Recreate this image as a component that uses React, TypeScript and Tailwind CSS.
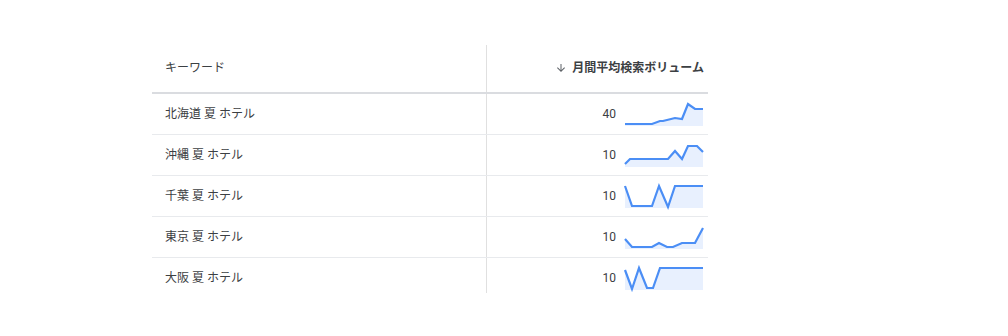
import React from "react";

type Row = {
	keyword: string;
	volume: number;
	points: [number, number][];
};

const rows: Row[] = [
	{ keyword: "北海道 夏 ホテル", volume: 40, points: [[1, 21], [28, 21], [36, 18], [39, 18], [51, 15], [58, 16], [64, 1], [71, 6], [79, 6]] },
	{ keyword: "沖縄 夏 ホテル", volume: 10, points: [[1, 20], [6, 15], [44, 15], [51, 7], [58, 15], [64, 2], [73, 2], [79, 8]] },
	{ keyword: "千葉 夏 ホテル", volume: 10, points: [[1, 1], [8, 21], [28, 21], [35, 1], [44, 22], [51, 1], [79, 1]] },
	{ keyword: "東京 夏 ホテル", volume: 10, points: [[1, 13], [8, 21], [28, 21], [35, 17], [43, 21], [49, 21], [58, 17], [71, 17], [79, 2]] },
	{ keyword: "大阪 夏 ホテル", volume: 10, points: [[1, 3], [8, 22], [15, 1], [23, 21], [29, 21], [36, 1], [79, 1]] },
];

const Sparkline = ({ points }: { points: [number, number][] }) => {
	const line = points.map(([x, y]) => `${x},${y}`).join(" ");
	const area = `${points[0][0]},23 ${line} ${points[points.length - 1][0]},23`;
	return (
		<svg width="80" height="23" viewBox="0 0 80 23" className="overflow-visible">
			<polygon points={area} fill="#e8f0fe" />
			<polyline points={line} fill="none" stroke="#4b8ef5" strokeWidth="2.2" strokeLinejoin="miter" />
		</svg>
	);
};

export default function App() {
	return (
		<div className="w-[1008px] h-[336px] bg-white pt-[45px] pl-[152px] font-['Roboto','Noto_Sans_CJK_JP',sans-serif]">
			<div className="w-[556px] h-[248px] overflow-hidden">
				{/* Header */}
				<div className="grid grid-cols-[335px_221px] h-[49px] border-b-2 border-[#dadce0]">
					<div className="flex items-center pl-[13px] pb-[2px] border-r border-[#e0e0e0] text-[12px] text-[#3c4043]">
						キーワード
					</div>
					<div className="flex items-center justify-end pr-[4px] pb-[2px] gap-[5px] text-[12px] font-bold text-[#3c4043]">
						<svg width="12" height="12" viewBox="0 0 24 24" fill="#5f6368">
							<path d="M20 12l-1.41-1.41L13 16.17V4h-2v12.17l-5.58-5.59L4 12l8 8 8-8z" />
						</svg>
						月間平均検索ボリューム
					</div>
				</div>

				{/* Rows */}
				{rows.map((r) => (
					<div key={r.keyword} className="grid grid-cols-[335px_221px] h-[41px] border-b border-[#e8eaed]">
						<div className="flex items-center pl-[13px] border-r border-[#e0e0e0] text-[12px] text-[#3c4043]">
							{r.keyword}
						</div>
						<div className="flex items-center justify-end pr-[4px] gap-[8px]">
							<span className="text-[12px] text-[#3c4043]">{r.volume}</span>
							<Sparkline points={r.points} />
						</div>
					</div>
				))}
			</div>
		</div>
	);
}
